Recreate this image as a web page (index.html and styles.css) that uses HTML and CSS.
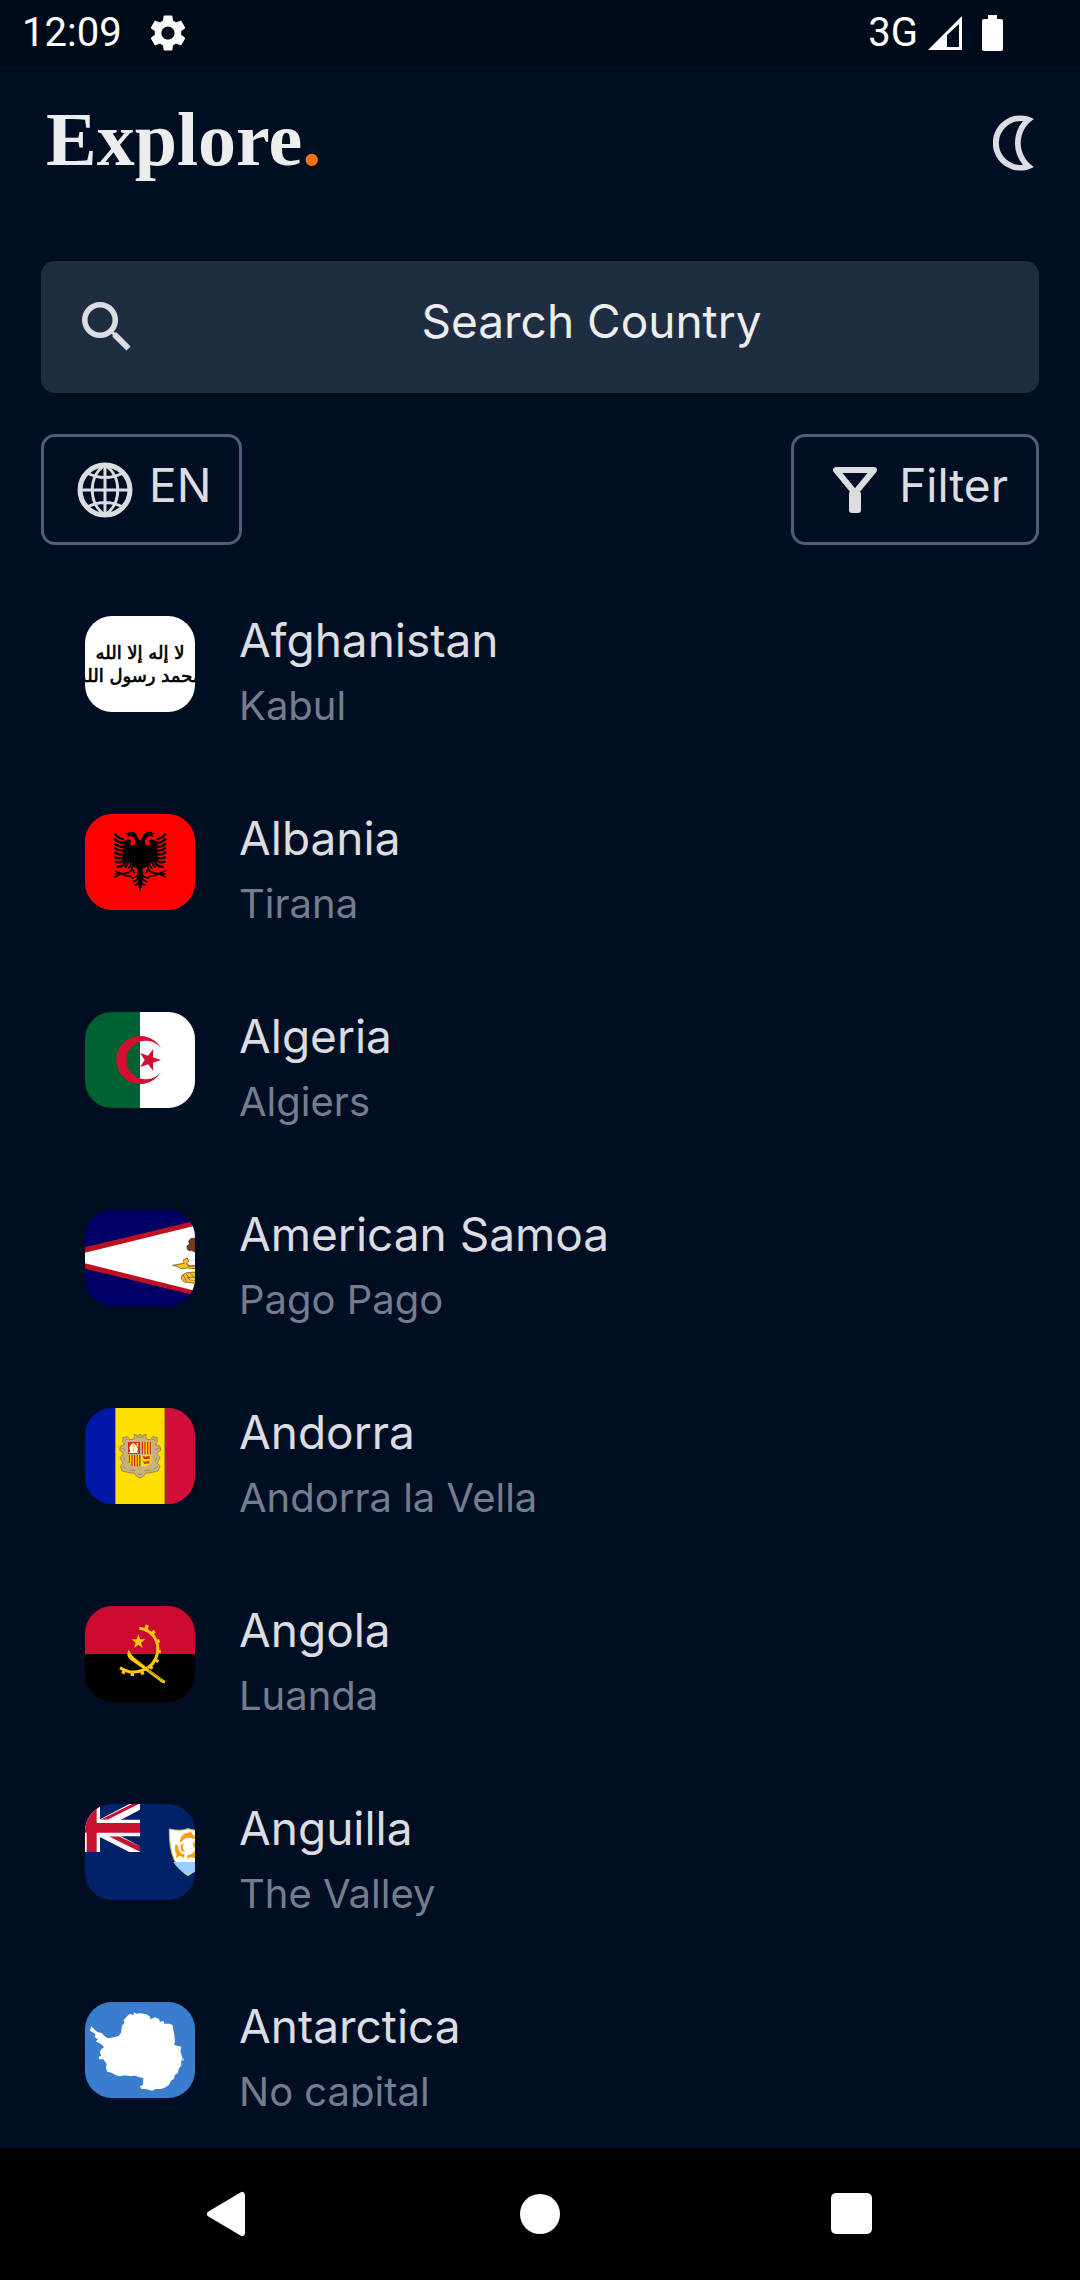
FILE: index.html
```html
<!DOCTYPE html>
<html lang="en">
<head>
<meta charset="utf-8">
<meta name="viewport" content="width=device-width, initial-scale=1">
<title>Explore</title>
<link rel="stylesheet" href="styles.css">
</head>
<body>
<div class="status-bar">
  <span class="status-time">12:09</span>
  <svg class="status-gear" viewBox="0 0 24 24" aria-hidden="true"><path d="M19.14 12.94c.04-.3.06-.61.06-.94 0-.32-.02-.64-.07-.94l2.03-1.58c.18-.14.23-.41.12-.61l-1.92-3.32c-.12-.22-.37-.29-.59-.22l-2.39.96c-.5-.38-1.03-.7-1.62-.94l-.36-2.54c-.04-.24-.24-.41-.48-.41h-3.84c-.24 0-.43.17-.47.41l-.36 2.54c-.59.24-1.13.57-1.62.94l-2.39-.96c-.22-.08-.47 0-.59.22L2.74 8.87c-.12.21-.08.47.12.61l2.03 1.58c-.05.3-.09.63-.09.94s.02.64.07.94l-2.03 1.58c-.18.14-.23.41-.12.61l1.92 3.32c.12.22.37.29.59.22l2.39-.96c.5.38 1.03.7 1.62.94l.36 2.54c.05.24.24.41.48.41h3.84c.24 0 .44-.17.47-.41l.36-2.54c.59-.24 1.13-.56 1.62-.94l2.39.96c.22.08.47 0 .59-.22l1.92-3.32c.12-.22.07-.47-.12-.61l-2.01-1.58zM12 15.6c-1.98 0-3.6-1.62-3.6-3.6s1.62-3.6 3.6-3.6 3.6 1.62 3.6 3.6-1.62 3.6-3.6 3.6z"/></svg>
  <span class="status-network">3G</span>
  <svg class="status-signal" viewBox="0 0 34 34" aria-hidden="true"><path fill-rule="evenodd" d="M0 34 34 0V34ZM19 19V31H31V8Z"/></svg>
  <svg class="status-battery" viewBox="0 0 21 36" aria-hidden="true"><path d="M6 0h9v4h4q2 0 2 2v28q0 2-2 2H2q-2 0-2-2V6q0-2 2-2h4Z"/></svg>
</div>

<header class="app-header">
  <h1 class="logo">Explore<span class="logo-dot">.</span></h1>
  <button class="theme-toggle" type="button" aria-label="Dark theme">
    <svg class="icon-moon" viewBox="0 0 41 56" aria-hidden="true"><path fill-rule="evenodd" d="M41 4A27.600 27.600 0 1 0 41 52A28.300 28.300 0 0 1 41 4ZM30 6A22.100 22.100 0 1 0 30 50A34 34 0 0 1 30 6Z"/></svg>
  </button>
</header>

<main class="content">
  <label class="search">
    <svg class="icon-search" viewBox="3 3 18 18" aria-hidden="true"><path d="M15.500 14h-.79l-.28-.27C15.410 12.590 16 11.110 16 9.500 16 5.910 13.090 3 9.500 3S3 5.910 3 9.500 5.910 16 9.500 16c1.610 0 3.090-.59 4.230-1.570l.27.28v.79l5 4.990L20.490 19l-4.990-5zm-6 0C7.010 14 5 11.990 5 9.500S7.010 5 9.500 5 14 7.010 14 9.500 11.990 14 9.500 14z"/></svg>
    <input class="search-input" type="text" placeholder="Search Country" aria-label="Search Country">
  </label>

  <div class="toolbar">
    <button class="tool tool-language" type="button">
      <svg class="icon-globe" viewBox="0 0 56 56" aria-hidden="true"><circle class="globe-rim" cx="28" cy="28" r="25"/><path d="M28 2V54M2 28H54M28 3C11 14 11 42 28 53M28 3C45 14 45 42 28 53M10 11Q28 20 46 11M10 45Q28 36 46 45"/></svg>
      <span class="tool-label">EN</span>
    </button>
    <button class="tool tool-filter" type="button">
      <svg class="icon-filter" viewBox="0 0 44 46" aria-hidden="true"><path class="funnel" d="M3 3H41L22 26Z"/><rect x="16" y="24" width="12" height="22" rx="3"/></svg>
      <span class="tool-label">Filter</span>
    </button>
  </div>

  <ul class="countries">
    <li class="country">
      <svg class="flag" viewBox="45 48 330 288" role="img" aria-label="Flag of Afghanistan">
        <path fill="#fff" d="M45 48h330v288H45z"/>
        <g class="flag-script">
          <text x="210" y="178">لا إله إلا الله</text>
          <text x="210" y="246">محمد رسول الله</text>
        </g>
      </svg>
      <div class="country-text"><h2 class="name">Afghanistan</h2><p class="capital">Kabul</p></div>
    </li>
    <li class="country">
      <svg class="flag" viewBox="45 42 330 288" role="img" aria-label="Flag of Albania">
        <path fill="red" d="M45 42h330v288H45z"/>
        <g id="eagle-half">
          <path d="M211 122 204 114 199 102Q190 93 178 96L164 101 175 104 170 110 184 108Q197 114 196 128 193 140 182 136 178 130 184 122 178 114 160 124L159 182 176 184 190 200 204 206 201 218 206 262 211 276Z"/>
          <path fill="none" stroke="#000" stroke-width="7" d="M162 118Q146 117 134 101M162 128Q146 130 133 116M162 140Q146 142 133 130M162 151Q146 155 133 143M162 161Q148 168 133 156M162 171Q150 180 133 170M164 178Q154 192 135 184M170 180Q162 202 140 200"/>
          <path fill="none" stroke="#000" stroke-width="5" d="M176 182Q174 196 164 203M184 184Q184 198 174 206M191 190 182 214 170 218M187 207 194 220M134 212 166 226 184 230M134 232 150 222 176 218M133 222H160M204 222Q198 236 184 233M205 232Q200 246 189 244M207 243Q204 256 194 254"/>
        </g>
        <use href="#eagle-half" transform="matrix(-1 0 0 1 421 0)"/>
        <circle cx="184" cy="102" r="2" fill="red"/><circle cx="237" cy="102" r="2" fill="red"/>
      </svg>
      <div class="country-text"><h2 class="name">Albania</h2><p class="capital">Tirana</p></div>
    </li>
    <li class="country">
      <svg class="flag" viewBox="45 36 330 288" role="img" aria-label="Flag of Algeria">
        <path fill="#006233" d="M45 36h165v288H45z"/><path fill="#fff" d="M210 36h165v288H210z"/>
        <path fill="#d21034" d="M273 144A72 72 0 1 0 273 216A58 58 0 1 1 273 144ZM273 180 249 188 250 213 234 193 210 201 224 180 210 159 234 167 250 147 249 172Z"/>
      </svg>
      <div class="country-text"><h2 class="name">Algeria</h2><p class="capital">Algiers</p></div>
    </li>
    <li class="country">
      <svg class="flag" viewBox="45 30 330 288" role="img" aria-label="Flag of American Samoa">
        <path fill="#006" d="M45 30h330v288H45z"/>
        <path fill="#bd1021" d="M45 142 375 62V286L45 206Z"/>
        <path fill="#fff" d="M45 158 375 77V272L45 190Z"/>
        <path fill="#7b3a1e" stroke="#2a1208" stroke-width="2" d="M376 114 362 116 356 124 359 132 351 138 352 148 358 152 366 150 368 158 376 154Z"/>
        <path fill="#fff" stroke="#999" stroke-width="1" d="M364 152 350 172 344 180 354 184 376 178V158Z"/>
        <path fill="#ffc221" stroke="#5b3b00" stroke-width="2" d="M308 196 330 192 342 190 340 180 352 174 356 184 350 192 362 198 376 196V206L352 204 332 206 324 200ZM376 216 350 218 336 226 334 236 342 246 360 248 376 250V240L360 240 352 232 376 234Z"/>
        <path fill="none" stroke="#5b3b00" stroke-width="2" d="M340 226 350 244M348 222 362 238M360 220 372 232M352 198H372"/>
      </svg>
      <div class="country-text"><h2 class="name">American Samoa</h2><p class="capital">Pago Pago</p></div>
    </li>
    <li class="country">
      <svg class="flag" viewBox="45 39 330 288" role="img" aria-label="Flag of Andorra">
        <path fill="#0018a8" d="M45 39h91v288H45z"/><path fill="#d0103a" d="M284 39h91v288h-91z"/><path fill="#fedf00" d="M136 39h148v288H136z"/>
        <path fill="#c7b37f" stroke="#a18449" stroke-width="3" d="M193 118 204 122 210 118 217 122 228 118 228 132 242 134 248 125 261 128 262 142 255 148 270 154 272 166 260 174 270 188 262 204 270 214 264 228 246 232 228 234 220 244 210 249 200 244 192 234 174 232 156 228 151 214 159 204 150 188 161 174 149 166 151 154 165 148 158 142 159 128 172 125 179 134 193 132Z"/>
        <path fill="none" stroke="#8f7545" stroke-width="2" d="M164 136 174 132M246 132 256 136M156 160 166 164M254 164 266 160M158 214 170 222M250 222 264 214M180 226H196M224 226H242M198 126H222M204 238H216M161 186 166 200M260 186 256 200"/>
        <path fill="#d52b1e" d="M174 141h36v36h-36z"/><path fill="#fedf00" d="M213 141h31v36h-31zM174 180h36v33q-30 2-36-14zM213 180h31v20q-4 14-31 14z"/>
        <path fill="none" stroke="#d52b1e" stroke-width="4" d="M217 141v36M225 141v36M233 141v36M241 141v36M178 180v24M186 180v32M194 180v34M202 180v34M209 180v34"/>
        <path fill="#fff" d="M190 144 198 150 204 162 201 172 208 174H174L181 170 178 158 184 148Z"/><path fill="#fedf00" d="M188 144h5v26h-5zM199 144h6v12h-4z"/>
        <path fill="#d52b1e" d="M218 182 226 185 238 182 240 193 234 191 224 193 220 190ZM218 197 226 200 238 197 238 207 232 205 224 208Z"/>
      </svg>
      <div class="country-text"><h2 class="name">Andorra</h2><p class="capital">Andorra la Vella</p></div>
    </li>
    <li class="country">
      <svg class="flag" viewBox="45 33 330 288" role="img" aria-label="Flag of Angola">
        <path fill="#cc092f" d="M45 33h330v144H45z"/><path d="M45 177h330v144H45z"/>
        <path fill="none" stroke="#ffcb00" stroke-width="9" d="M208 100C246 104 270 138 262 176C252 222 196 248 150 218"/>
        <path fill="none" stroke="#ffcb00" stroke-width="10" d="M228 101 232 90M245 117 254 108M257 141 269 137M262 168 273 171M254 193 265 200M238 212 247 221M214 227 219 239M187 231 187 243M164 225 158 236"/>
        <path fill="#ffcb00" d="M176 164 187 182 244 228 286 258 284 265 277 264 232 230 186 198Q170 188 172 174Z"/>
        <path fill="none" stroke="#000" stroke-width="2" stroke-dasharray="4 3" d="M192 186 246 230M236 226 278 256"/>
        <path fill="#ffcb00" d="M205 117 210 133 226 133 213 143 218 159 205 149 192 159 197 143 184 133 200 133Z"/>
      </svg>
      <div class="country-text"><h2 class="name">Angola</h2><p class="capital">Luanda</p></div>
    </li>
    <li class="country">
      <svg class="flag" viewBox="45 27 330 288" role="img" aria-label="Flag of Anguilla">
        <path fill="#012169" d="M45 27h330v288H45z"/>
        <path fill="#fff" d="M78 99 88 74 178 27H210V44L106 99 210 154V171H178L78 120Z"/>
        <path fill="#c8102e" d="M92 74 186 27H206L112 74ZM116 124 210 170V154L146 124Z"/>
        <path fill="#fff" d="M45 27H90V171H45ZM45 74H210V124H45Z"/>
        <path fill="#c8102e" d="M50 27H80V171H50ZM45 84H210V113H45Z"/>
        <path fill="#fff" stroke="#c9cf3c" stroke-width="3" d="M298 102Q332 110 354 101 378 110 410 102V150Q406 216 354 242 296 210 298 102Z"/>
        <path fill="#9cf" d="M310 201H398Q382 230 354 240 325 226 310 201Z"/>
        <path fill="#ff9d0c" d="M330 136Q334 114 356 113L362 108 366 117Q376 122 380 134 366 128 354 128 342 128 336 140L328 142ZM318 146 324 154Q326 178 344 178L342 189 330 182 318 189 320 178Q310 164 318 146ZM352 180Q370 180 376 162V190L362 186 352 192ZM370 140 376 146V160Q366 154 370 140ZM332 150 342 144Q334 160 346 170L334 168Z"/>
      </svg>
      <div class="country-text"><h2 class="name">Anguilla</h2><p class="capital">The Valley</p></div>
    </li>
    <li class="country">
      <svg class="flag" viewBox="45 36 330 288" role="img" aria-label="Flag of Antarctica">
        <path fill="#3a7dce" d="M45 36h330v288H45z"/>
        <path fill="#fff" d="M64 108 72 118 82 126 95 129 103 138 114 145 132 142 146 138 153 128 156 108 163 98 161 90 170 80 178 72 190 74 193 66 198 71 212 70 230 73 240 80 242 88 256 82 267 87 270 96 280 92 283 101 298 101 308 105 310 120 313 134 315 155 312 164 324 168 334 170 331 184 335 196 338 206 333 214 334 226 326 236 324 248 314 256 312 266 303 272 297 284 288 291 274 297 258 297 246 302 230 298 213 296 210 289 219 284 220 264 208 262 196 257 180 258 164 256 150 259 138 256 124 248 112 245 108 234 110 222 100 208 88 208 86 200 94 197 89 186 95 176 102 172 96 164 86 158 77 154 84 148 74 142 76 132 66 126 60 122Z"/><path fill="#fff" d="M338 206h3v6h-3z"/>
      </svg>
      <div class="country-text"><h2 class="name">Antarctica</h2><p class="capital">No capital</p></div>
    </li>
  </ul>
</main>

<nav class="system-nav" aria-label="System">
  <button class="nav-button" type="button" aria-label="Back"><svg class="nav-icon" viewBox="0 0 46 46" aria-hidden="true"><path stroke="#fff" stroke-width="6" stroke-linejoin="round" d="M5 23 37 4V42Z"/></svg></button>
  <button class="nav-button" type="button" aria-label="Home"><svg class="nav-icon" viewBox="0 0 46 46" aria-hidden="true"><circle cx="23" cy="23" r="20"/></svg></button>
  <button class="nav-button" type="button" aria-label="Recent apps"><svg class="nav-icon" viewBox="0 0 46 46" aria-hidden="true"><rect x="2" y="2" width="41" height="41" rx="5"/></svg></button>
</nav>
</body>
</html>
```
FILE: styles.css
```css
* {
  box-sizing: border-box;
  margin: 0;
  padding: 0;
}

body {
  display: flex;
  flex-direction: column;
  height: 100vh;
  background: #000e24;
  color: #dcdde1;
  font-family: Inter, "Noto Sans", sans-serif;
  font-size: 46px;
}

svg {
  display: block;
  flex: none;
  fill: currentColor;
}

button {
  border: 0;
  background: none;
  color: inherit;
  font: inherit;
}

/* System status bar */
.status-bar {
  display: flex;
  align-items: center;
  flex: none;
  padding: 0 77px 0 22px;
  background: #000b1a;
  color: #fff;
  font-family: Roboto, sans-serif;
  font-size: 40px;
  line-height: 66px;
}

.status-gear {
  width: 44px;
  height: 44px;
  margin-left: 24px;
}

.status-network {
  margin-left: auto;
}

.status-signal {
  width: 34px;
  height: 34px;
  margin-left: 10px;
}

.status-battery {
  width: 21px;
  height: 36px;
  margin-left: 20px;
}

/* Header */
.app-header {
  display: flex;
  align-items: center;
  justify-content: space-between;
  flex: none;
  padding: 29px 46px 70px;
}

.logo {
  padding-bottom: 8px;
  color: #ededed;
  font-family: "Liberation Serif", serif;
  font-size: 76px;
  font-weight: 700;
  line-height: 88px;
}

.logo-dot {
  color: #ff7300;
}

.icon-moon {
  width: 41px;
  height: 56px;
}

/* Search and toolbar */
.content {
  display: flex;
  flex-direction: column;
  flex: 1;
  min-height: 0;
  padding: 0 41px 41px;
}

.search {
  display: flex;
  align-items: center;
  flex: none;
  gap: 12px;
  padding: 0 0 0 41px;
  border-radius: 14px;
  background: #1f2d42;
}

.icon-search {
  width: 50px;
  height: 50px;
}

.search-input {
  flex: 1;
  min-width: 0;
  padding: 30px 0 42px;
  border: 0;
  outline: 0;
  background: none;
  color: #ededed;
  font: inherit;
  line-height: 60px;
  text-align: center;
}

.search-input::placeholder {
  color: #ededed;
  opacity: 1;
}

.toolbar {
  display: flex;
  justify-content: space-between;
  flex: none;
  margin-top: 41px;
}

.tool {
  display: flex;
  align-items: center;
  border: 3px solid #4f5d78;
  border-radius: 14px;
  line-height: 60px;
}

.tool-language {
  gap: 16px;
  padding: 0 28px 0 33px;
}

.tool-filter {
  gap: 22px;
  padding: 0 28px 0 39px;
}

.tool-label {
  padding: 18px 0 27px;
}

.icon-globe {
  width: 56px;
  height: 56px;
  fill: none;
  stroke: currentColor;
  stroke-width: 3px;
}

.globe-rim {
  stroke-width: 5px;
}

.icon-filter {
  width: 44px;
  height: 46px;
}

.funnel {
  fill: none;
  stroke: currentColor;
  stroke-width: 6px;
  stroke-linejoin: round;
}

/* Country list */
.countries {
  display: flex;
  flex-direction: column;
  flex: 1;
  gap: 68px;
  min-height: 0;
  margin-top: 63px;
  padding: 0 44px;
  overflow: hidden;
  list-style: none;
}

.country {
  display: flex;
  flex: none;
  gap: 44px;
}

.flag {
  width: 110px;
  height: 96px;
  margin-top: 8px;
  border-radius: 27px;
  fill: #000;
}

.flag-script {
  font-family: "DejaVu Sans", sans-serif;
  font-size: 54px;
  stroke: #000;
  stroke-width: 2px;
  text-anchor: middle;
}

.name,
.capital {
  font-weight: 400;
  line-height: 65px;
}

.name {
  font-size: 46px;
}

.capital {
  color: #737d8e;
  font-size: 40px;
}

/* System navigation */
.system-nav {
  display: flex;
  flex: none;
  padding: 0 72px;
  background: #000;
  color: #fff;
}

.nav-button {
  display: flex;
  align-items: center;
  justify-content: center;
  flex: 1;
  padding: 43px 0;
}

.nav-icon {
  width: 46px;
  height: 46px;
}
```
